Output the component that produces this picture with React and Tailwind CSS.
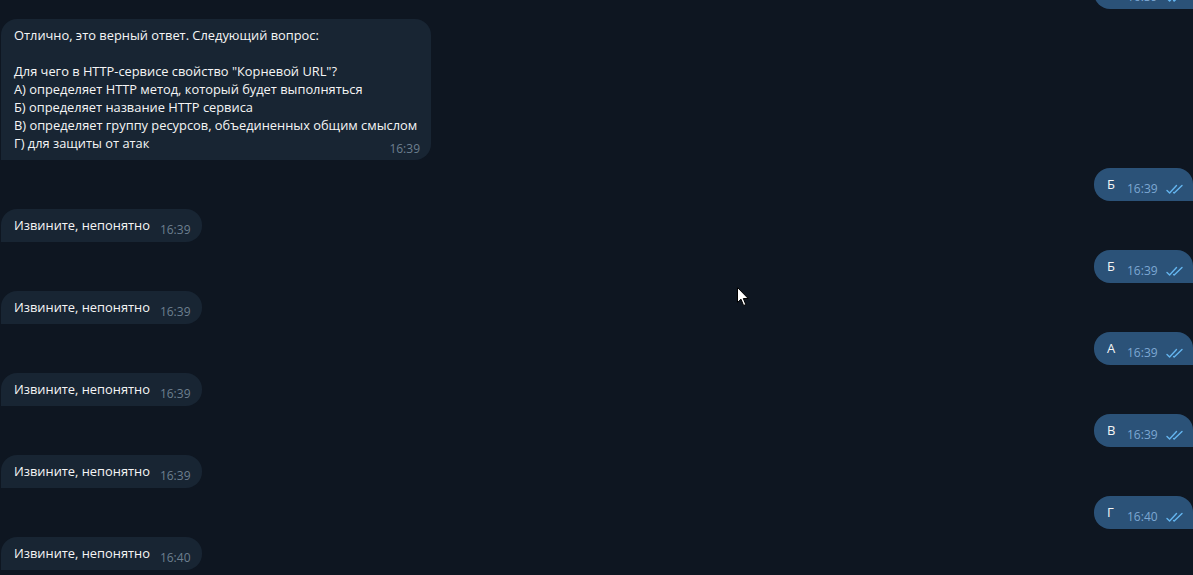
const font = { fontFamily: '"Open Sans", "Noto Sans", sans-serif' };

function Checks() {
  return (
    <svg width="18" height="11" viewBox="0 0 18 11" fill="none" className="text-[#64b5ef]">
      <path d="M1 6.5 L3.6 9 L10.5 1.5" stroke="currentColor" strokeWidth="1.4" strokeLinecap="round" strokeLinejoin="round" />
      <path d="M7.6 8.6 L8.2 9 L16 1.5" stroke="currentColor" strokeWidth="1.4" strokeLinecap="round" strokeLinejoin="round" />
    </svg>
  );
}

function Outgoing({ text, time }) {
  return (
    <div className="flex justify-end">
      <div className="flex h-[33px] w-[99px] items-start rounded-[16px] rounded-br-none bg-[#2b5278] pl-[13px] pt-[7px]">
        <span className="w-[7px] text-[13px] leading-[18px] text-[#f5f5f5]">{text}</span>
        <span className="ml-[13px] mt-[6px] text-[12px] leading-[16px] text-[#7da8d3]">{time}</span>
        <span className="ml-[8px] mt-[9px] flex"><Checks /></span>
      </div>
    </div>
  );
}

function Incoming({ text, time }) {
  return (
    <div className="flex">
      <div className="ml-[1px] flex h-[33px] items-start rounded-[16px] rounded-bl-none bg-[#182533] pl-[13px] pr-[11px] pt-[7px]">
        <span className="text-[12.85px] leading-[18px] text-[#f5f5f5]">{text}</span>
        <span className="ml-[10px] mt-[6px] text-[12px] leading-[16px] text-[#6d7f8f]">{time}</span>
      </div>
    </div>
  );
}

const pairs = [
  { out: "Б", outTime: "16:39", inTime: "16:39" },
  { out: "Б", outTime: "16:39", inTime: "16:39" },
  { out: "А", outTime: "16:39", inTime: "16:39" },
  { out: "В", outTime: "16:39", inTime: "16:39" },
  { out: "Г", outTime: "16:40", inTime: "16:40" },
];

export default function App() {
  return (
    <div className="relative h-[575px] w-[1193px] overflow-hidden bg-[#0e1621]" style={font}>
      <div className="-mt-[24px] flex flex-col gap-[8px]">
        <Outgoing text="Г" time="16:39" />
        <div className="mt-[2px] flex">
          <div className="relative ml-[1px] w-[430px] rounded-[16px] rounded-bl-none bg-[#182533] pb-[8px] pl-[13px] pt-[7px] text-[12.85px] leading-[18px] text-[#f5f5f5]">
            <p>Отлично, это верный ответ. Следующий вопрос:</p>
            <p className="h-[18px]"></p>
            <p>Для чего в HTTP-сервисе свойство "Корневой URL"?</p>
            <p>А) определяет HTTP метод, который будет выполняться</p>
            <p>Б) определяет название HTTP сервиса</p>
            <p>В) определяет группу ресурсов, объединенных общим смыслом</p>
            <p>Г) для защиты от атак</p>
            <span className="absolute bottom-[3px] right-[11px] text-[12px] leading-[16px] text-[#6d7f8f]">16:39</span>
          </div>
        </div>
        {pairs.map((p, i) => (
          <div key={i} className="flex flex-col gap-[8px]">
            <Outgoing text={p.out} time={p.outTime} />
            <Incoming text="Извините, непонятно" time={p.inTime} />
          </div>
        ))}
      </div>
      <svg className="absolute left-[737px] top-[287px]" width="13" height="20" viewBox="0 0 13 20">
        <path d="M0.5 0.5 L0.5 15.5 L4 12.2 L6.6 18.5 L8.8 17.6 L6.3 11.5 L11.2 11.5 Z" fill="#ffffff" stroke="#000000" strokeWidth="1" />
      </svg>
    </div>
  );
}
